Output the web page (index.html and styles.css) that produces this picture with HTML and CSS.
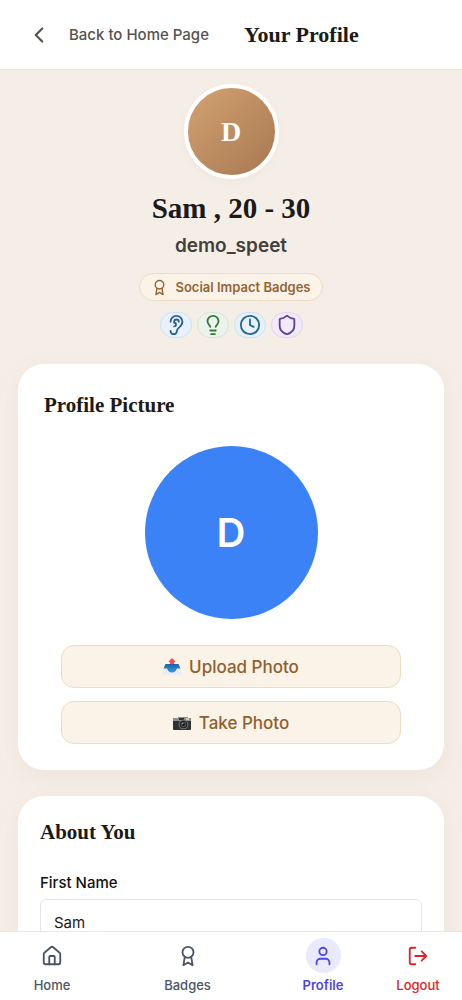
FILE: index.html
```html
<!DOCTYPE html>
<html lang="en">
<head>
<meta charset="utf-8">
<meta name="viewport" content="width=device-width, initial-scale=1">
<title>Your Profile</title>
<link rel="stylesheet" href="styles.css">
</head>
<body>
<div class="app">
  <header class="topbar">
    <a class="back" href="#home">
      <svg class="back-icon" viewBox="0 0 24 24"><path d="m15 18-6-6 6-6"/></svg>
      <span>Back to Home Page</span>
    </a>
    <h1 class="topbar-title">Your Profile</h1>
  </header>

  <main class="content">
    <section class="hero">
      <div class="avatar">D</div>
      <h2 class="name">Sam , 20 - 30</h2>
      <p class="username">demo_speet</p>
      <div class="pill">
        <svg class="pill-icon" viewBox="0 0 24 24"><circle cx="12" cy="8" r="6"/><path d="M8.500 13 7 22l5-3 5 3-1.500-9"/></svg>
        <span>Social Impact Badges</span>
      </div>
      <ul class="badges">
        <li class="badge badge-ear"><svg viewBox="0 0 24 24"><path d="M6 8.500a6.500 6.500 0 1 1 13 0c0 6-6 6-6 10a3.500 3.500 0 1 1-7 0"/><path d="M15 8.500a2.500 2.500 0 0 0-5 0v1a2 2 0 1 1 0 4"/></svg></li>
        <li class="badge badge-bulb"><svg viewBox="0 0 24 24"><path d="M15 14c.2-1 .7-1.700 1.500-2.500 1-.9 1.500-2.200 1.500-3.500A6 6 0 0 0 6 8c0 1 .2 2.200 1.500 3.500.7.7 1.300 1.500 1.500 2.500"/><path d="M9 18h6M10 22h4"/></svg></li>
        <li class="badge badge-clock"><svg viewBox="0 0 24 24"><circle cx="12" cy="12" r="10"/><path d="M12 6v6l4 2"/></svg></li>
        <li class="badge badge-shield"><svg viewBox="0 0 24 24"><path d="M20 13c0 5-3.500 7.500-7.660 8.950a1 1 0 0 1-.67-.01C7.500 20.500 4 18 4 13V6a1 1 0 0 1 1-1c2 0 4.500-1.200 6.240-2.720a1.170 1.170 0 0 1 1.520 0C14.510 3.810 17 5 19 5a1 1 0 0 1 1 1z"/></svg></li>
      </ul>
    </section>

    <section class="card picture-card">
      <h2 class="card-title">Profile Picture</h2>
      <div class="photo">D</div>
      <div class="actions">
        <button class="action" type="button">
          <svg class="emoji" viewBox="0 0 18 18">
            <defs><linearGradient id="tray" x2="0" y2="1"><stop stop-color="#1d5fa8"/><stop offset="1" stop-color="#3b9bea"/></linearGradient></defs>
            <path d="M0 10h18v7H0z" fill="#eceef0"/>
            <path d="M2.500 6h13L17.500 10.500H14c-1 1.500-1.500 4-5 4s-4-2.500-5-4H.5z" fill="url(#tray)"/>
            <path d="M9 0l3.500 3.500-1.500 1V6H7V4.500l-1.500-1z" fill="#ff4b45"/>
          </svg>
          <span>Upload Photo</span>
        </button>
        <button class="action" type="button">
          <svg class="emoji" viewBox="0 0 18 18">
            <path d="M1 4h4l1-1h8l1 1h2q1 0 1 1v10q0 1-1 1H1q-1 0-1-1V5q0-1 1-1z" fill="#303234"/>
            <path d="M1 4h4l1-1h8l1 1h2q1 0 1 1v2H0V5q0-1 1-1z" fill="#8c9092"/>
            <path d="M6 4h5v2H6z" fill="#303234"/>
            <path d="M13 4h3v2h-3z" fill="#d8c9a0"/>
            <circle cx="10.500" cy="10.500" r="4.800" fill="#8a8d90"/>
            <circle cx="10.500" cy="10.500" r="4" fill="#242628"/>
            <circle cx="10.500" cy="10.500" r="2.500" fill="#5d6164"/>
            <circle cx="10.500" cy="10.500" r="1.700" fill="#1b1c1e"/>
            <circle cx="9.700" cy="9.600" r=".7" fill="#b9bdc0"/>
          </svg>
          <span>Take Photo</span>
        </button>
      </div>
    </section>

    <section class="card about-card">
      <h2 class="card-title">About You</h2>
      <label class="label" for="first-name">First Name</label>
      <input class="field" id="first-name" type="text" value="Sam">
    </section>
  </main>

  <nav class="tabbar">
    <div class="tabs">
      <a class="tab" href="#home">
        <span class="tab-icon"><svg viewBox="0 0 24 24"><path d="M15 21v-8a1 1 0 0 0-1-1h-4a1 1 0 0 0-1 1v8"/><path d="M3 10a2 2 0 0 1 .7-1.500l7-6a2 2 0 0 1 2.600 0l7 6A2 2 0 0 1 21 10v9a2 2 0 0 1-2 2H5a2 2 0 0 1-2-2z"/></svg></span>
        <span>Home</span>
      </a>
      <a class="tab" href="#badges">
        <span class="tab-icon"><svg viewBox="0 0 24 24"><circle cx="12" cy="8" r="6"/><path d="M8.500 13 7 22l5-3 5 3-1.500-9"/></svg></span>
        <span>Badges</span>
      </a>
      <a class="tab tab-active" href="#profile">
        <span class="tab-icon"><svg viewBox="0 0 24 24"><path d="M19 21v-2a4 4 0 0 0-4-4H9a4 4 0 0 0-4 4v2"/><circle cx="12" cy="7" r="4"/></svg></span>
        <span>Profile</span>
      </a>
    </div>
    <button class="tab tab-logout" type="button">
      <span class="tab-icon"><svg viewBox="0 0 24 24"><path d="M9 21H5a2 2 0 0 1-2-2V5a2 2 0 0 1 2-2h4M16 17l5-5-5-5M21 12H9"/></svg></span>
      <span>Logout</span>
    </button>
  </nav>
</div>
</body>
</html>
```

FILE: styles.css
```css
* {
  box-sizing: border-box;
  margin: 0;
  padding: 0;
}

body {
  font-family: Inter, "Liberation Sans", sans-serif;
  color: #1c1a17;
  background: #f5eee7;
}

a {
  color: inherit;
  text-decoration: none;
}

svg {
  display: block;
  flex: none;
  fill: none;
  stroke: currentColor;
  stroke-width: 2;
  stroke-linecap: round;
  stroke-linejoin: round;
}

.app {
  display: flex;
  flex-direction: column;
  height: 100vh;
}

.topbar {
  flex: none;
  display: flex;
  align-items: center;
  gap: 35px;
  height: 70px;
  padding: 0 26px;
  background: #fff;
  border-bottom: 1px solid #f2e5d3;
}

.back {
  display: flex;
  align-items: center;
  gap: 17px;
  font-size: 15px;
  font-weight: 500;
  color: #57534e;
  white-space: nowrap;
}

.back-icon {
  width: 26px;
  height: 26px;
}

.topbar-title,
.name,
.card-title,
.avatar {
  font-family: "Liberation Serif", serif;
  font-weight: 700;
}

.topbar-title {
  font-size: 22px;
  line-height: 28px;
  white-space: nowrap;
}

.content {
  flex: 1;
  min-height: 0;
  overflow-y: auto;
  scrollbar-width: none;
  padding: 14px 18px 0;
}

.hero {
  display: flex;
  flex-direction: column;
  align-items: center;
}

.avatar {
  display: grid;
  place-items: center;
  width: 95px;
  height: 95px;
  border: 4px solid #fff;
  border-radius: 50%;
  font-size: 28px;
  line-height: 28px;
  color: #fff;
  background: linear-gradient(135deg, #d4a574, #a67550) border-box;
  box-shadow: 0 2px 8px rgba(166, 117, 80, 0.06);
}

.name {
  margin-top: 11px;
  font-size: 29px;
  line-height: 36px;
}

.username {
  margin-top: 6px;
  font-size: 19px;
  font-weight: 600;
  line-height: 28px;
  color: #44403c;
}

.pill {
  display: flex;
  align-items: center;
  gap: 7px;
  height: 28px;
  margin-top: 13px;
  padding: 0 11px;
  border: 1px solid #ecdcc2;
  border-radius: 14px;
  background: #fbf3e8;
  color: #946434;
  font-size: 13px;
  font-weight: 600;
}

.pill-icon {
  width: 17px;
  height: 17px;
}

.badges {
  display: flex;
  gap: 5px;
  margin-top: 11px;
  list-style: none;
}

.badge {
  display: grid;
  place-items: center;
  width: 32px;
  height: 26px;
  border: 1px solid;
  border-radius: 13px;
}

.badge svg {
  width: 22px;
  height: 22px;
}

.badge-ear {
  color: #2c5f92;
  background: #e9f2fc;
  border-color: #cfe2f3;
}

.badge-bulb {
  color: #38783e;
  background: #eaf4ea;
  border-color: #d3e8d4;
}

.badge-clock {
  color: #26658f;
  background: #e6f1fa;
  border-color: #cbe2f2;
}

.badge-shield {
  color: #60409a;
  background: #f0eafa;
  border-color: #e0d4f2;
}

.card {
  margin-top: 26px;
  border-radius: 26px;
  background: #fff;
  box-shadow: 0 8px 24px rgba(160, 120, 60, 0.08);
}

.card-title {
  font-size: 21px;
  line-height: 28px;
}

.picture-card {
  padding: 27px 26px 26px;
}

.photo {
  display: grid;
  place-items: center;
  width: 173px;
  height: 173px;
  margin: 27px auto 26px;
  border-radius: 50%;
  background: #3b82f6;
  color: #fff;
  font-size: 40px;
  font-weight: 600;
}

.actions {
  display: grid;
  gap: 13px;
  padding: 0 17px;
}

.action {
  display: flex;
  align-items: center;
  justify-content: center;
  gap: 8px;
  height: 43px;
  border: 1px solid #ecdcc2;
  border-radius: 13px;
  background: #fbf3e8;
  color: #8f602f;
  font: 500 17px Inter, "Liberation Sans", sans-serif;
}

.emoji {
  width: 18px;
  height: 18px;
  stroke: none;
}

.about-card {
  padding: 22px 22px 26px;
}

.label {
  display: block;
  margin-top: 27px;
  font-size: 15px;
  font-weight: 500;
  line-height: 20px;
  color: #111;
}

.field {
  display: block;
  width: 100%;
  height: 46px;
  margin-top: 6px;
  padding: 0 13px;
  border: 1px solid #e5e5e5;
  border-radius: 6px;
  background: #fff;
  color: #1c1a17;
  font: 400 15px Inter, "Liberation Sans", sans-serif;
}

.tabbar {
  flex: none;
  display: flex;
  gap: 25px;
  height: 69px;
  padding: 6px 9px 0 17px;
  border-top: 1px solid #e5e7eb;
  background: #fff;
}

.tabs {
  flex: 1;
  display: flex;
  justify-content: space-between;
}

.tab {
  display: flex;
  flex-direction: column;
  align-items: center;
  gap: 4px;
  width: 70px;
  height: 56px;
  border: 0;
  background: none;
  color: #4b5563;
  font: 500 13px/17px Inter, "Liberation Sans", sans-serif;
}

.tab-icon {
  display: grid;
  place-items: center;
  width: 35px;
  height: 35px;
  border-radius: 50%;
}

.tab-icon svg {
  width: 22px;
  height: 22px;
}

.tab-active {
  color: #4f46e5;
  font-weight: 600;
}

.tab-active .tab-icon {
  background: #e9e9ff;
}

.tab-logout {
  color: #dc2626;
}
```
